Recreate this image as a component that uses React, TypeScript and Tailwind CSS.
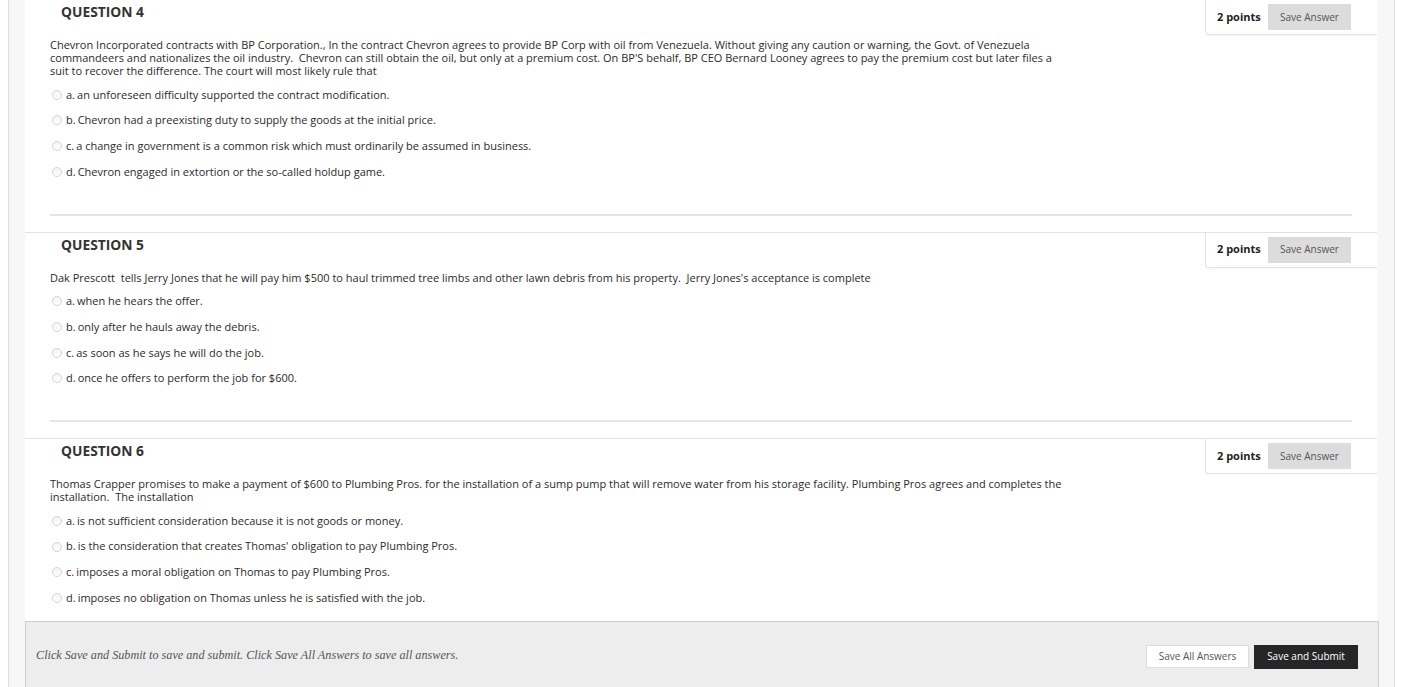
import React from "react";

type Question = {
  num: number;
  text: string;
  options: string[];
  last?: boolean;
};

const questions: Question[] = [
  {
    num: 4,
    text:
      "Chevron Incorporated contracts with BP Corporation., In the contract Chevron agrees to provide BP Corp with oil from Venezuela. Without giving any caution or warning, the Govt. of Venezuela commandeers and nationalizes the oil industry.  Chevron can still obtain the oil, but only at a premium cost. On BP'S behalf, BP CEO Bernard Looney agrees to pay the premium cost but later files a suit to recover the difference. The court will most likely rule that",
    options: [
      "an unforeseen difficulty supported the contract modification.",
      "Chevron had a preexisting duty to supply the goods at the initial price.",
      "a change in government is a common risk which must ordinarily be assumed in business.",
      "Chevron engaged in extortion or the so-called holdup game.",
    ],
  },
  {
    num: 5,
    text:
      "Dak Prescott  tells Jerry Jones that he will pay him $500 to haul trimmed tree limbs and other lawn debris from his property.  Jerry Jones's acceptance is complete",
    options: [
      "when he hears the offer.",
      "only after he hauls away the debris.",
      "as soon as he says he will do the job.",
      "once he offers to perform the job for $600.",
    ],
  },
  {
    num: 6,
    text:
      "Thomas Crapper promises to make a payment of $600 to Plumbing Pros. for the installation of a sump pump that will remove water from his storage facility. Plumbing Pros agrees and completes the installation.  The installation",
    options: [
      "is not sufficient consideration because it is not goods or money.",
      "is the consideration that creates Thomas' obligation to pay Plumbing Pros.",
      "imposes a moral obligation on Thomas to pay Plumbing Pros.",
      "imposes no obligation on Thomas unless he is satisfied with the job.",
    ],
    last: true,
  },
];

const letters = ["a.", "b.", "c.", "d."];

function QuestionBlock({ q }: { q: Question }) {
  return (
    <div className="bg-white border-t border-[#e2e2e2]">
      <div className="flex justify-between items-start">
        <h3 className="pl-[36px] pt-[2px] text-[13.8px] leading-[20px] font-bold text-[#333]">
          QUESTION {q.num}
        </h3>
        <div className="w-[172px] h-[35px] flex items-center pl-[11px] pr-[26px] border-l border-b border-[#e2e2e2] rounded-bl-[4px] shadow-[0_1px_1px_rgba(0,0,0,0.03)]">
          <span className="text-[11px] font-bold text-[#222] whitespace-nowrap">2 points</span>
          <button className="ml-auto w-[83px] h-[26px] bg-[#dcdcdc] text-[10px] text-[#555]">
            Save Answer
          </button>
        </div>
      </div>
      <div className="px-[25px]">
        <p className="mt-[3px] max-w-[1020px] text-[11px] leading-[13px] text-[#2b2b2b] whitespace-pre-wrap">
          {q.text}
        </p>
        <div className="mt-[5px] flex flex-col">
          {q.options.map((opt, i) => (
            <label key={i} className="h-[25.67px] flex items-center text-[11px] text-[#2b2b2b]">
              <span className="ml-[2px] w-[10px] h-[10px] rounded-full border border-[#d4d4d4] bg-gradient-to-b from-[#f4f4f4] to-white" />
              <span className="ml-[4px]">{letters[i]}</span>
              <span className="ml-[2px]">{opt}</span>
            </label>
          ))}
        </div>
        {q.last ? (
          <div className="h-[10px]" />
        ) : (
          <>
            <div className="mt-[29px] border-t-2 border-[#e4e4e4]" />
            <div className="h-[16px]" />
          </>
        )}
      </div>
    </div>
  );
}

export default function App() {
  return (
    <div className="min-h-screen bg-white pl-[8px] pr-[26px] font-['Open_Sans',sans-serif] overflow-hidden">
      <div className="min-h-screen border-x border-[#dedede] bg-[#f7f7f7] pl-[16px] pr-[17px] -mt-px">
        {questions.map((q) => (
          <QuestionBlock key={q.num} q={q} />
        ))}
        <div className="mr-[-2px] bg-[#ededed] border border-[#cfcfcf] h-[100px] flex items-start pl-[10px] pr-[20px] pt-[23px]">
          <p className="mt-[1px] font-['Liberation_Serif',serif] italic text-[12.2px] text-[#555]">
            Click Save and Submit to save and submit. Click Save All Answers to save all answers.
          </p>
          <div className="ml-auto flex items-center gap-[5px]">
            <button className="w-[103px] h-[23px] bg-white border border-[#dcdcdc] text-[10px] text-[#555]">
              Save All Answers
            </button>
            <button className="w-[104px] h-[24px] bg-[#262626] text-[10px] text-white">
              Save and Submit
            </button>
          </div>
        </div>
      </div>
    </div>
  );
}
